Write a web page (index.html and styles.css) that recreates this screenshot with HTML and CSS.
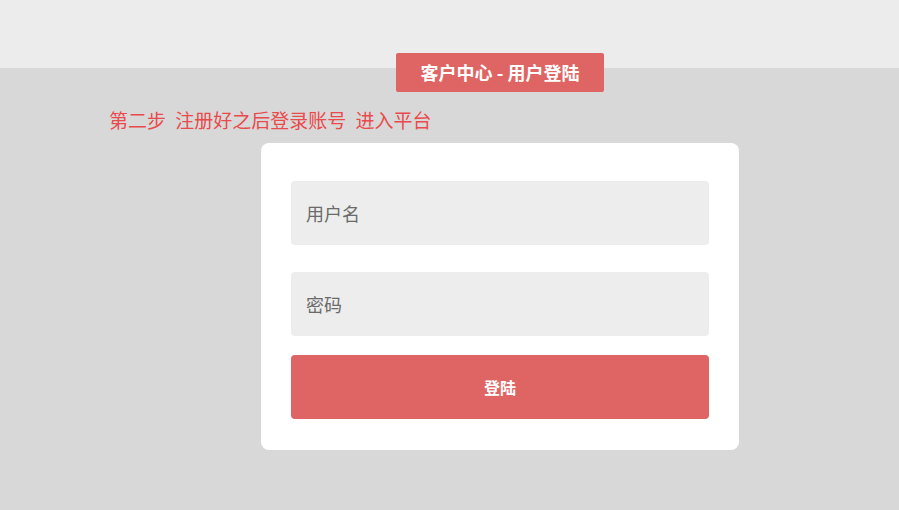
FILE: index.html
```html
<!DOCTYPE html>
<html>
  <head>
    <title>客户中心 - 用户登陆</title>
    <meta name="viewport" content="width=device-width, initial-scale=1.0">
    <link rel="stylesheet" href="styles.css">
  </head>
  <body>
    <div class = "topbar"></div>
    <div class = "wrap">
      <div class = "title">客户中心 - 用户登陆</div>
      <div class = "step">第二步 注册好之后登录账号 进入平台</div>
      <div class = "card">
        <form class = "loginform">
          <input type = "text" class = "field" placeholder="用户名" autofocus>
          <input type = "password" class = "field" placeholder="密码">
          <button type = "button" class = "btnlogin">登陆</button>
        </form>
      </div>
    </div>
  </body>
</html>
```

FILE: styles.css
```css
*{box-sizing:border-box;margin:0;padding:0;font-family:"Noto Sans CJK SC","Noto Sans",sans-serif;}
*:focus{outline:none;}
html,body{overflow:hidden;}
body{background:#d8d8d8;height:100vh;}
.topbar{height:68px;width:100%;background:#ececec;}
/* content block is shifted right: centre sits at x=500 */
.wrap{width:100%;padding-left:101px;}
.title{width:208px;height:39px;line-height:39px;margin:-15px auto 0;background:#df6464;color:#fff;
  font-size:18px;font-weight:700;text-align:center;border-radius:2px;}
.step{margin-top:15px;padding-left:8px;font-size:19px;line-height:26px;color:#e94a4c;word-spacing:5px;}
.card{width:478px;margin:10px auto 0;padding:38px 30px 31px;background:#fff;border-radius:8px;}
.loginform{display:flex;flex-direction:column;}
.field{height:64px;width:100%;border:none;border-radius:4px;background:#ededed;padding:0 15px;
  font-size:18px;color:#555;}
.field::placeholder{color:#6a6a6a;}
.field + .field{margin-top:27px;}
.btnlogin{height:64px;width:100%;margin-top:19px;border:none;border-radius:4px;background:#df6464;
  color:#fff;font-size:16px;font-weight:700;cursor:pointer;}
```
